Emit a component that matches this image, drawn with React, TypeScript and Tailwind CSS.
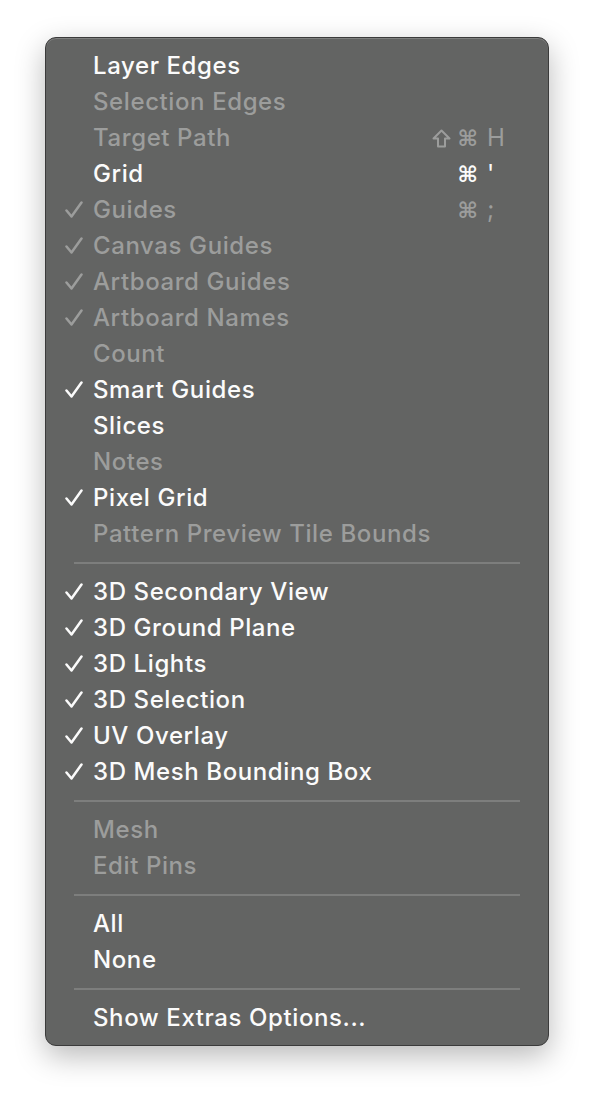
type Item = {
  label: string;
  enabled: boolean;
  checked?: boolean;
  shift?: boolean;
  keyChar?: string;
};

const groups: Item[][] = [
  [
    { label: "Layer Edges", enabled: true },
    { label: "Selection Edges", enabled: false },
    { label: "Target Path", enabled: false, shift: true, keyChar: "H" },
    { label: "Grid", enabled: true, keyChar: "'" },
    { label: "Guides", enabled: false, checked: true, keyChar: ";" },
    { label: "Canvas Guides", enabled: false, checked: true },
    { label: "Artboard Guides", enabled: false, checked: true },
    { label: "Artboard Names", enabled: false, checked: true },
    { label: "Count", enabled: false },
    { label: "Smart Guides", enabled: true, checked: true },
    { label: "Slices", enabled: true },
    { label: "Notes", enabled: false },
    { label: "Pixel Grid", enabled: true, checked: true },
    { label: "Pattern Preview Tile Bounds", enabled: false },
  ],
  [
    { label: "3D Secondary View", enabled: true, checked: true },
    { label: "3D Ground Plane", enabled: true, checked: true },
    { label: "3D Lights", enabled: true, checked: true },
    { label: "3D Selection", enabled: true, checked: true },
    { label: "UV Overlay", enabled: true, checked: true },
    { label: "3D Mesh Bounding Box", enabled: true, checked: true },
  ],
  [
    { label: "Mesh", enabled: false },
    { label: "Edit Pins", enabled: false },
  ],
  [
    { label: "All", enabled: true },
    { label: "None", enabled: true },
  ],
  [{ label: "Show Extras Options...", enabled: true }],
];

function Check() {
  return (
    <svg width="18" height="18" viewBox="0 0 18 18" fill="none">
      <path
        d="M1.5 9.5 L6.5 15.5 L16.5 1.5"
        stroke="currentColor"
        strokeWidth="2.5"
        strokeLinecap="round"
        strokeLinejoin="round"
      />
    </svg>
  );
}

function ShiftIcon() {
  return (
    <svg width="19" height="19" viewBox="0 0 19 19" fill="none">
      <path
        d="M9.5 1.5 L17.5 9.5 L13 9.5 L13 17.5 L6 17.5 L6 9.5 L1.5 9.5 Z"
        stroke="currentColor"
        strokeWidth="2"
        strokeLinejoin="round"
      />
    </svg>
  );
}

function Row({ item }: { item: Item }) {
  return (
    <div
      className={
        "flex h-[36px] items-center " +
        (item.enabled ? "text-[#fbfbfb]" : "text-[#9c9d9c]")
      }
    >
      <div className="flex w-[47px] justify-end pr-[10px]">
        {item.checked && <Check />}
      </div>
      <span className="flex-1 text-[24px] font-medium tracking-[0.6px]">
        {item.label}
      </span>
      {item.keyChar && (
        <div className="flex items-center">
          <div className="flex items-center gap-[7px] pr-[9px]">
            {item.shift && <ShiftIcon />}
            <span className="font-['DejaVu_Sans',sans-serif] text-[22px] font-bold">
              ⌘
            </span>
          </div>
          <span className="w-[61px] text-[24px] font-normal">
            {item.keyChar}
          </span>
        </div>
      )}
    </div>
  );
}

export default function App() {
  return (
    <div className="min-h-screen bg-white pl-[45px] pt-[37px] font-['Inter',sans-serif]">
      <div className="w-[504px] rounded-[11px] border border-[#3b3b3b] bg-[#636463] pt-[10px] pb-[9px] shadow-[0_10px_30px_rgba(0,0,0,0.28),inset_0_1px_0_rgba(255,255,255,0.18)]">
        {groups.map((group, gi) => (
          <div key={gi}>
            {gi > 0 && (
              <div className="flex h-[22px] items-center px-[28px]">
                <div className="h-[2px] w-full bg-[#7d7e7d]" />
              </div>
            )}
            {group.map((item) => (
              <Row key={item.label} item={item} />
            ))}
          </div>
        ))}
      </div>
    </div>
  );
}
